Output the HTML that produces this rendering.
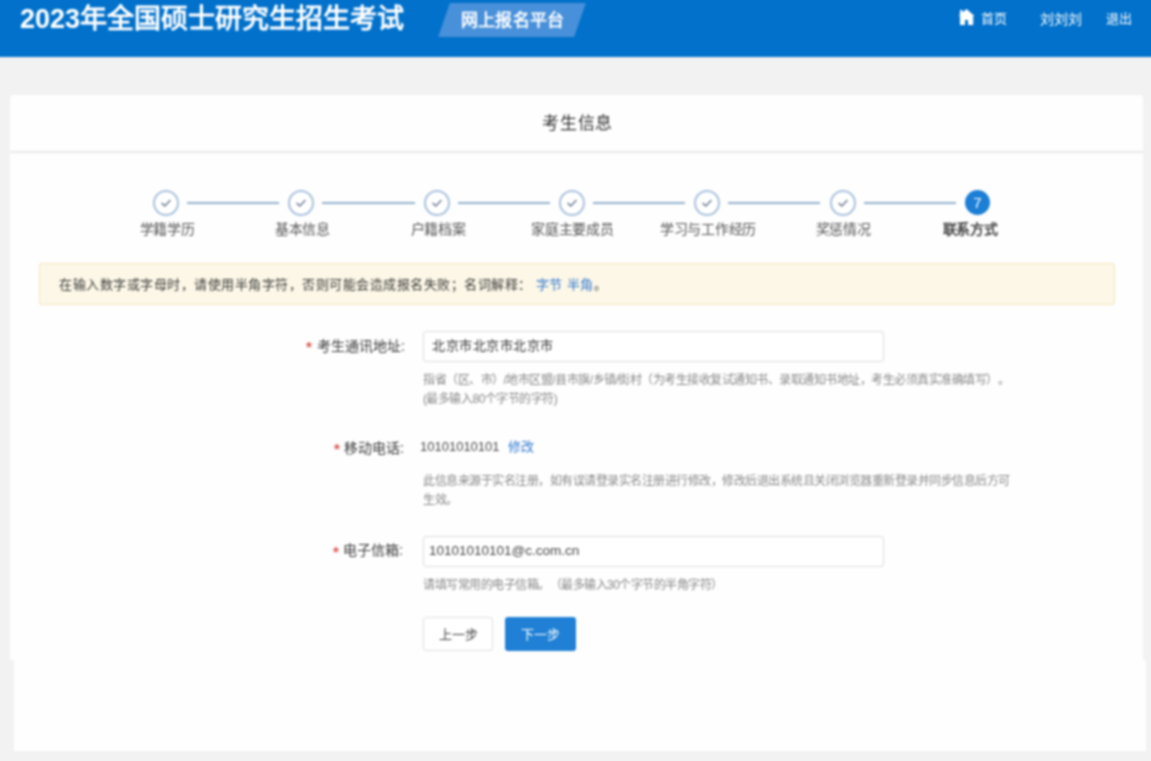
<!DOCTYPE html>
<html lang="zh-CN"><head><meta charset="utf-8">
<style>
*{margin:0;padding:0;box-sizing:border-box}
#root{position:absolute;left:0;top:0;width:1151px;height:761px;filter:blur(0.8px)}
html,body{width:1151px;height:761px;overflow:hidden;background:#f2f2f2;font-family:"Liberation Sans",sans-serif;color:#555;font-weight:500}
.a{position:absolute;white-space:nowrap;text-spacing-trim:space-all}
#hdr{position:absolute;left:-10px;top:-10px;width:1171px;height:67px;background:#0171cb}
#title{left:20px;top:2px;font-size:27px;line-height:34px;font-weight:bold;color:#fff}
#tag{left:444px;top:3px;width:136px;height:34px;background:#4890da;transform:skewX(-19deg)}
#tagt{left:461px;top:9px;font-size:17px;letter-spacing:0.2px;line-height:24px;font-weight:bold;color:#fff}
.nav{top:10px;font-size:13px;line-height:18px;color:#fff}
#card{position:absolute;left:10px;top:95px;width:1133px;height:565px;background:#fefefe;border-radius:3px 3px 0 0}
#card2{position:absolute;left:14px;top:660px;width:1132px;height:91px;background:#fefefe}
#sep{position:absolute;left:10px;top:151px;width:1133px;height:1.5px;background:#e9e9e9}
#ctitle{left:542px;top:113px;font-size:17px;letter-spacing:0.8px;line-height:22px;color:#333}
.circ{position:absolute;top:190px;width:26px;height:26px;border:2px solid #a9c1dc;border-radius:50%;background:#fff}
.circ svg{position:absolute;left:4px;top:4px}
.line{position:absolute;top:202px;height:2px;background:#93b1cc}
.slab{top:220px;font-size:14px;letter-spacing:-0.3px;line-height:18px;color:#555}
#warn{position:absolute;left:39px;top:263px;width:1076px;height:42px;background:#fcf7e7;border:1px solid #f2e3b8;border-radius:3px}
#warnt{left:59px;top:276px;font-size:13px;letter-spacing:0.5px;line-height:18px;color:#3a3a3a}
.blue{color:#3379d0}
.star{color:#d9534f;font-size:15px;font-weight:bold;line-height:18px}
.lbl{font-size:14px;line-height:18px;color:#3a3a3a}
.inp{position:absolute;left:423px;width:461px;height:31px;border:1px solid #dcdcdc;border-radius:3px;background:#fff}
.itxt{font-size:13px;letter-spacing:0.5px;line-height:18px;color:#333}
.help{font-size:12px;letter-spacing:-0.5px;line-height:19px;color:#888}
.btn{position:absolute;top:617px;width:70px;height:34px;border-radius:3px;font-size:13px;line-height:34px;text-align:center}
</style></head><body><div id="root">
<div id="hdr"></div>
<div class="a" id="title">2023年全国硕士研究生招生考试</div>
<div class="a" id="tag"></div>
<div class="a" id="tagt">网上报名平台</div>
<svg class="a" style="left:958px;top:8px" width="17" height="18" viewBox="0 0 17 18"><path d="M8.5 1 L16.5 8 L15.2 8 L15.2 17 L10 17 L10 12 L7 12 L7 17 L2 17 L2 8 L0.5 8 L2 6.7 L2 2 L4.5 2 L4.5 4.5 Z" fill="#fff"/></svg>
<div class="a nav" style="left:981px">首页</div>
<div class="a nav" style="left:1040px;font-size:14px">刘刘刘</div>
<div class="a nav" style="left:1106px">退出</div>

<div id="card"></div>
<div id="card2"></div>
<div id="sep"></div>
<div class="a" id="ctitle">考生信息</div>

<div class="circ" style="left:153px"><svg width="14" height="14" viewBox="0 0 14 14"><path d="M3 7.4 L5.8 10 L11 4.6" fill="none" stroke="#6f7d92" stroke-width="1.5" stroke-linecap="round" stroke-linejoin="round"/></svg></div>
<div class="line" style="left:187.0px;width:92.3px"></div>
<div class="circ" style="left:288.3px"><svg width="14" height="14" viewBox="0 0 14 14"><path d="M3 7.4 L5.8 10 L11 4.6" fill="none" stroke="#6f7d92" stroke-width="1.5" stroke-linecap="round" stroke-linejoin="round"/></svg></div>
<div class="line" style="left:322.3px;width:92.3px"></div>
<div class="circ" style="left:423.6px"><svg width="14" height="14" viewBox="0 0 14 14"><path d="M3 7.4 L5.8 10 L11 4.6" fill="none" stroke="#6f7d92" stroke-width="1.5" stroke-linecap="round" stroke-linejoin="round"/></svg></div>
<div class="line" style="left:457.6px;width:92.3px"></div>
<div class="circ" style="left:558.9px"><svg width="14" height="14" viewBox="0 0 14 14"><path d="M3 7.4 L5.8 10 L11 4.6" fill="none" stroke="#6f7d92" stroke-width="1.5" stroke-linecap="round" stroke-linejoin="round"/></svg></div>
<div class="line" style="left:592.9px;width:92.3px"></div>
<div class="circ" style="left:694.2px"><svg width="14" height="14" viewBox="0 0 14 14"><path d="M3 7.4 L5.8 10 L11 4.6" fill="none" stroke="#6f7d92" stroke-width="1.5" stroke-linecap="round" stroke-linejoin="round"/></svg></div>
<div class="line" style="left:728.2px;width:92.3px"></div>
<div class="circ" style="left:829.5px"><svg width="14" height="14" viewBox="0 0 14 14"><path d="M3 7.4 L5.8 10 L11 4.6" fill="none" stroke="#6f7d92" stroke-width="1.5" stroke-linecap="round" stroke-linejoin="round"/></svg></div>
<div class="line" style="left:863.5px;width:92.3px"></div>
<div class="circ" style="left:964.8px;background:#1c7fd5;border-color:#1c7fd5;color:#fff;font-size:15px;font-weight:normal;text-align:center;line-height:22px;width:25px;height:25px">7</div>
<div class="a slab" style="left:167px;transform:translateX(-50%);">学籍学历</div>
<div class="a slab" style="left:302.5px;transform:translateX(-50%);">基本信息</div>
<div class="a slab" style="left:438px;transform:translateX(-50%);">户籍档案</div>
<div class="a slab" style="left:572.5px;transform:translateX(-50%);">家庭主要成员</div>
<div class="a slab" style="left:708px;transform:translateX(-50%);">学习与工作经历</div>
<div class="a slab" style="left:843px;transform:translateX(-50%);">奖惩情况</div>
<div class="a slab" style="left:970px;transform:translateX(-50%);color:#444;font-weight:bold">联系方式</div>

<div id="warn"></div>
<div class="a" id="warnt">在输入数字或字母时，请使用半角字符，否则可能会造成报名失败；名词解释： <span class="blue">字节</span> <span class="blue">半角</span>。</div>

<div class="a star" style="left:306px;top:338px">*</div>
<div class="a lbl" style="left:317px;top:337px">考生通讯地址:</div>
<div class="inp" style="top:331px"></div>
<div class="a itxt" style="left:432px;top:337px">北京市北京市北京市</div>
<div class="a help" style="left:423px;top:371px">指省（区、市）/地市区盟/县市旗/乡镇/街村（为考生接收复试通知书、录取通知书地址，考生必须真实准确填写）。</div>
<div class="a help" style="left:423px;top:390px">(最多输入80个字节的字符)</div>

<div class="a star" style="left:334px;top:440px">*</div>
<div class="a lbl" style="left:344px;top:439px">移动电话:</div>
<div class="a itxt" style="left:420px;top:438px;letter-spacing:0;color:#4a4a4a">10101010101<span class="blue" style="margin-left:8px">修改</span></div>
<div class="a help" style="left:423px;top:472px">此信息来源于实名注册，如有误请登录实名注册进行修改，修改后退出系统且关闭浏览器重新登录并同步信息后方可</div>
<div class="a help" style="left:423px;top:491px">生效。</div>

<div class="a star" style="left:333px;top:543px">*</div>
<div class="a lbl" style="left:343px;top:541px">电子信箱:</div>
<div class="inp" style="top:536px"></div>
<div class="a itxt" style="left:429px;top:542px;letter-spacing:0;font-size:13.5px;color:#444">10101010101@c.com.cn</div>
<div class="a help" style="left:423px;top:576px">请填写常用的电子信箱。（最多输入30个字节的半角字符）</div>

<div class="btn" style="left:423px;border:1px solid #dedede;background:#fff;color:#444;line-height:33px">上一步</div>
<div class="btn" style="left:505px;width:71px;line-height:35px;background:#1f80d5;color:#fff">下一步</div>
</div></body></html>
